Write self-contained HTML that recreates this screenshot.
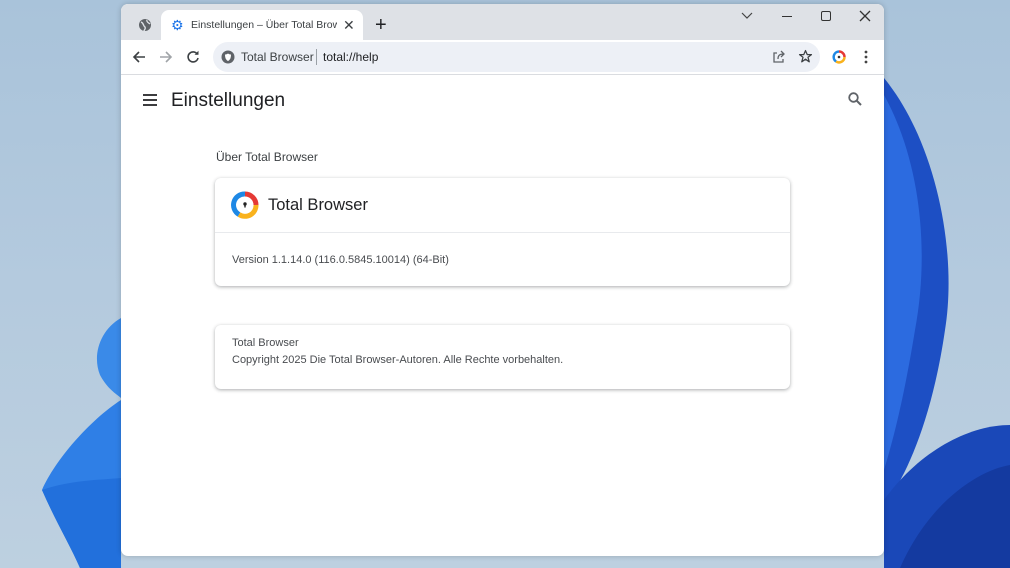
<!DOCTYPE html>
<html><head><style>
*{margin:0;padding:0;box-sizing:border-box}
body{width:1010px;height:568px;overflow:hidden;position:relative;font-family:"Liberation Sans","DejaVu Sans",sans-serif;background:linear-gradient(180deg,#a9c3da 0%,#b4cade 50%,#bdd0e0 100%)}
.bg{position:absolute;left:0;top:0}
.win{position:absolute;left:121px;top:4px;width:763px;height:552px;background:#fff;border-radius:7px;overflow:hidden;box-shadow:0 0 6px rgba(0,0,0,.2)}
.strip{height:36px;background:#dee1e6;position:relative}
.tab{position:absolute;left:40px;top:6px;width:202px;height:30px;background:#fff;border-radius:8px 8px 0 0;font-size:11px;color:#3c4043}
.tb{position:absolute;top:36px;left:0;right:0;height:35px;background:#fff;border-bottom:1px solid #dadce0}
.omni{position:absolute;left:92px;top:2px;width:607px;height:30px;background:#edf0f6;border-radius:15px;font-size:12px;color:#202124}
.t{position:absolute;white-space:nowrap}
.card{position:absolute;left:94px;width:575px;background:#fff;border-radius:6px;box-shadow:0 1px 3px rgba(60,64,67,.3),0 1px 4px rgba(60,64,67,.15)}
</style></head><body>
<svg class="bg" width="1010" height="568">
<path d="M884 78 C935 140 958 250 945 330 C932 420 905 480 884 505Z" fill="#1d4fc4"/>
<path d="M884 95 C920 160 930 250 915 330 C902 410 890 450 884 470Z" fill="#2c6be0"/>
<path d="M884 500 C920 450 970 425 1010 425 L1010 568 L884 568Z" fill="#1a48b8"/>
<path d="M900 568 C930 500 980 470 1010 465 L1010 568Z" fill="#143aa0"/>
<path d="M121 318 C100 330 92 355 100 375 C108 390 118 395 121 398Z" fill="#3a8ae8"/>
<path d="M121 400 C90 420 55 460 42 490 C55 520 70 545 80 568 L121 568Z" fill="#2f7fe6"/>
<path d="M42 490 C70 480 100 480 121 478 L121 568 L80 568 C70 545 55 520 42 490Z" fill="#2270dc"/>
</svg>
<div class="win">
 <div class="strip">
  <svg class="t" style="left:17px;top:14px" width="14" height="14" viewBox="0 0 14 14"><circle cx="7" cy="7" r="6" fill="#5f6368"/><path d="M3 4 C6 5 5 8 7 9 C8 11 6 12 6 13 M9 2 C8 4 11 5 12 6" stroke="#dee1e6" stroke-width="1.4" fill="none"/></svg>
  <div class="tab">
   <span class="t" style="left:10px;top:8px;color:#1a73e8;font-size:14px;line-height:14px">&#9881;</span>
   <span class="t" style="left:30px;top:9px;width:146px;overflow:hidden;font-size:10.5px">Einstellungen – Über Total Browser</span>
   <span class="t" style="left:182px;top:7px;font-size:14px">✕</span>
  </div>
  <span class="t" style="left:254px;top:11px;font-size:20px;color:#202124;line-height:20px">+</span>
  <svg class="t" style="left:620px;top:8px" width="12" height="8"><path d="M1 1 L6 6 L11 1" stroke="#444" fill="none" stroke-width="1.2"/></svg>
  <div class="t" style="left:661px;top:12px;width:10px;height:1px;background:#333"></div>
  <div class="t" style="left:700px;top:7px;width:10px;height:10px;border:1.2px solid #333;border-radius:2px"></div>
  <svg class="t" style="left:738px;top:6px" width="12" height="12"><path d="M1 1L11 11M11 1L1 11" stroke="#333" stroke-width="1.3"/></svg>
 </div>
 <div class="tb">
  <svg class="t" style="left:11px;top:10px" width="14" height="14"><path d="M13 7H2M7 2L2 7L7 12" stroke="#3c4043" stroke-width="1.6" fill="none"/></svg>
  <svg class="t" style="left:38px;top:10px" width="14" height="14"><path d="M1 7H12M7 2L12 7L7 12" stroke="#a0a4a8" stroke-width="1.6" fill="none"/></svg>
  <svg class="t" style="left:65px;top:10px" width="14" height="14"><path d="M11.5 4.5A5 5 0 1 0 12 8" stroke="#3c4043" stroke-width="1.6" fill="none"/><path d="M8.5 4.8H12.5V0.8Z" fill="#3c4043"/></svg>
  <div class="omni">
   <svg class="t" style="left:8px;top:8px" width="14" height="14"><circle cx="7" cy="7" r="6.5" fill="#5f6368"/><path d="M7 3.5C5.5 4.5 4.5 4.5 4 4.5 4 8 5 10 7 11 9 10 10 8 10 4.5 9.5 4.5 8.5 4.5 7 3.5Z" fill="#fff"/></svg>
   <span class="t" style="left:28px;top:8px;color:#3c4043">Total Browser</span>
   <div class="t" style="left:103px;top:7px;width:1px;height:16px;background:#9aa0a6"></div>
   <span class="t" style="left:110px;top:8px">total://help</span>
   <svg class="t" style="left:559px;top:8px" width="14" height="14"><path d="M5 3H2V12H11V9M6 9C6 5 8 4 12 4M9 1L12 4L9 7" stroke="#5f6368" stroke-width="1.3" fill="none"/></svg>
   <svg class="t" style="left:585px;top:7px" width="15" height="15" viewBox="0 0 24 24"><path d="M12 2.5L14.8 9H21.5L16 13.2L18 20.5L12 16.3L6 20.5L8 13.2L2.5 9H9.2Z" stroke="#3c4043" stroke-width="2" fill="none" stroke-linejoin="round"/></svg>
  </div>
  <svg class="t" style="left:711px;top:10px" width="14" height="14" viewBox="0 0 14 14"><path d="M7 1.5A5.5 5.5 0 0 1 12.5 7" stroke="#e53935" stroke-width="2.5" fill="none"/><path d="M12.5 7A5.5 5.5 0 0 1 4 11.5" stroke="#f9b21d" stroke-width="2.5" fill="none"/><path d="M4 11.5A5.5 5.5 0 0 1 7 1.5" stroke="#1e88e5" stroke-width="2.5" fill="none"/><circle cx="7" cy="7" r="1.3" fill="#333"/></svg>
  <svg class="t" style="left:743px;top:10px" width="4" height="14"><circle cx="2" cy="2" r="1.4" fill="#444"/><circle cx="2" cy="7" r="1.4" fill="#444"/><circle cx="2" cy="12" r="1.4" fill="#444"/></svg>
 </div>
 <svg class="t" style="left:22px;top:90px" width="14" height="12"><path d="M0 1H14M0 6H14M0 11H14" stroke="#202124" stroke-width="1.8"/></svg>
 <span class="t" style="left:50px;top:86px;font-size:19px;color:#202124">Einstellungen</span>
 <svg class="t" style="left:727px;top:88px" width="14" height="14"><circle cx="5.5" cy="5.5" r="4.3" stroke="#5f6368" stroke-width="1.8" fill="none"/><path d="M8.5 8.5L13 13" stroke="#5f6368" stroke-width="2"/></svg>
 <span class="t" style="left:95px;top:146px;font-size:12px;color:#3c4043">Über Total Browser</span>
 <div class="card" style="top:174px;height:108px">
  <svg class="t" style="left:16px;top:13px" width="28" height="28" viewBox="0 0 28 28"><path d="M14 3A11 11 0 0 1 25 14" stroke="#e53935" stroke-width="5" fill="none"/><path d="M25 14A11 11 0 0 1 8 23.5" stroke="#f9b21d" stroke-width="5" fill="none"/><path d="M8 23.5A11 11 0 0 1 14 3" stroke="#1e88e5" stroke-width="5" fill="none"/><path d="M14 7.5C12 9 10 9 9 9 9 15 11 18 14 20 17 18 19 15 19 9 18 9 16 9 14 7.5Z" fill="#fff"/><circle cx="14" cy="13" r="1.7" fill="#222"/><path d="M13.3 13.5H14.7V16.5H13.3Z" fill="#222"/></svg>
  <span class="t" style="left:53px;top:18px;font-size:16.5px;color:#202124">Total Browser</span>
  <div class="t" style="left:0;right:0;top:54px;height:1px;background:#e8eaed"></div>
  <span class="t" style="left:17px;top:76px;font-size:11px;color:#494c50">Version 1.1.14.0 (116.0.5845.10014) (64-Bit)</span>
 </div>
 <div class="card" style="top:321px;height:64px">
  <span class="t" style="left:17px;top:12px;font-size:11px;color:#494c50">Total Browser</span>
  <span class="t" style="left:17px;top:29px;font-size:11px;color:#494c50">Copyright 2025 Die Total Browser-Autoren. Alle Rechte vorbehalten.</span>
 </div>
</div>
</body></html>
